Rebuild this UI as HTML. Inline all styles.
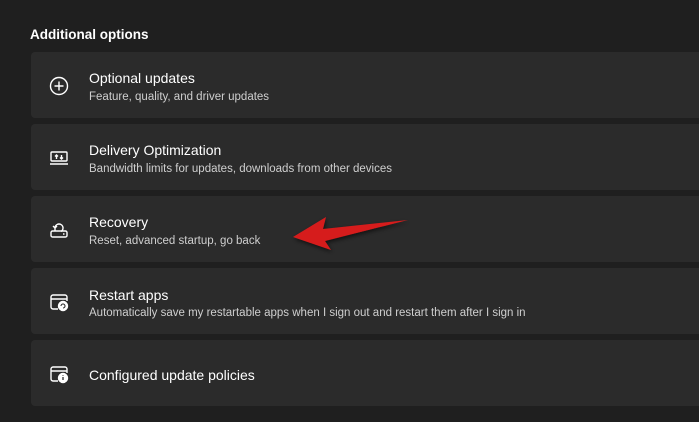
<!DOCTYPE html>
<html><head><style>
body{margin:0;width:699px;height:422px;background:#1f1f1f;font-family:"Liberation Sans",sans-serif;overflow:hidden;position:relative;color:#fff}
h2{position:absolute;left:30px;top:27px;margin:0;font-size:13.5px;font-weight:bold;color:#fff}
.card{position:absolute;left:31px;width:680px;height:66px;background:#2b2b2b;border-radius:4px}
.t{position:absolute;left:58px;font-size:14px;color:#fff}
.s{position:absolute;left:58px;font-size:11.5px;color:#cfcfcf}
svg.i{position:absolute;left:17px;top:23px}
</style></head><body>
<h2>Additional options</h2>
<div class="card" style="top:52px">
<svg class="i" width="22" height="22" viewBox="0 0 22 22" fill="none" stroke="#fff" stroke-width="1.4"><circle cx="11" cy="11" r="8.5"/><path d="M11 6.5v9M6.5 11h9"/></svg>
<div class="t" style="top:18px">Optional updates</div><div class="s" style="top:39px">Feature, quality, and driver updates</div></div>
<div class="card" style="top:124px">
<svg class="i" width="22" height="22" viewBox="0 0 22 22" fill="none" stroke="#fff" stroke-width="1.4"><rect x="3" y="5" width="16" height="9" rx="1"/><path d="M2 17h18M8.5 12V8M7 9.5l1.5-1.5 1.5 1.5M13.5 8v4M12 10.5l1.5 1.5 1.5-1.5"/></svg>
<div class="t" style="top:18px">Delivery Optimization</div><div class="s" style="top:39px">Bandwidth limits for updates, downloads from other devices</div></div>
<div class="card" style="top:196px">
<svg class="i" width="22" height="22" viewBox="0 0 22 22" fill="none" stroke="#fff" stroke-width="1.4"><rect x="3" y="12" width="16" height="6" rx="1.5"/><path d="M7 12V9a4 4 0 1 1 6 3.5M5 7l2 2 2-2M15 15h1.5"/></svg>
<div class="t" style="top:18px">Recovery</div><div class="s" style="top:39px">Reset, advanced startup, go back</div></div>
<div class="card" style="top:268px">
<svg class="i" width="22" height="22" viewBox="0 0 22 22" fill="none" stroke="#fff" stroke-width="1.4"><path d="M10 18H5a2 2 0 0 1-2-2V6a2 2 0 0 1 2-2h12a2 2 0 0 1 2 2v4M3 8h16"/><circle cx="15" cy="15" r="4.5" fill="#fff"/><path d="M13 15a2 2 0 1 1 2 2" stroke="#2b2b2b" stroke-width="1.1"/></svg>
<div class="t" style="top:19px">Restart apps</div><div class="s" style="top:39px">Automatically save my restartable apps when I sign out and restart them after I sign in</div></div>
<div class="card" style="top:340px">
<svg class="i" width="22" height="22" viewBox="0 0 22 22" fill="none" stroke="#fff" stroke-width="1.4"><path d="M10 18H5a2 2 0 0 1-2-2V6a2 2 0 0 1 2-2h12a2 2 0 0 1 2 2v4M3 8h16"/><circle cx="15" cy="15" r="4.5" fill="#fff"/><path d="M15 14v3M15 12.3v.6" stroke="#2b2b2b" stroke-width="1.3"/></svg>
<div class="t" style="top:27px">Configured update policies</div></div>
<svg style="position:absolute;left:0;top:0" width="699" height="422"><defs><filter id="f" x="-20%" y="-50%" width="140%" height="200%"><feDropShadow dx="1" dy="2" stdDeviation="2" flood-color="#000" flood-opacity=".6"/></filter></defs>
<path d="M293 237 L326 217 L323 229 L408 220 L325 241 L331 250 Z" fill="#d61c1c" filter="url(#f)"/></svg>
</body></html>
